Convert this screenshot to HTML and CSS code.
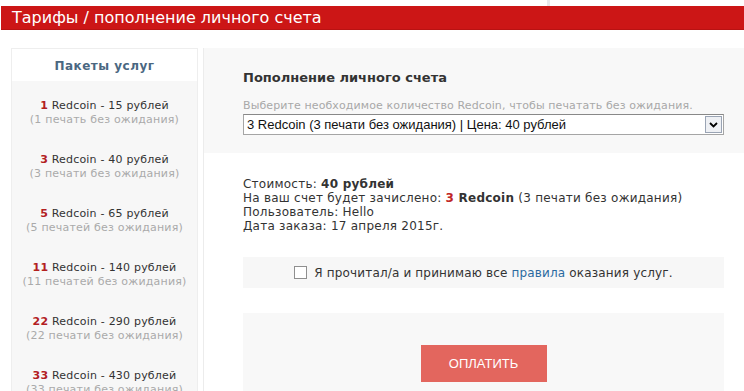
FILE: index.html
```html
<!DOCTYPE html>
<html lang="ru">

<head>
    <meta charset="UTF-8">
    <meta name="viewport" content="width=device-width, initial-scale=1.0">
    <title>Тарифы / пополнение личного счета</title>

    <link rel="stylesheet" href="styles.css">
</head>

<body>
    <div class="topStrip">
        <span class="topDivider"></span>
    </div>
    <div class="titleBar">
        <h1>Тарифы / пополнение личного счета</h1>
    </div>

    <div class="content">
        <div class="packs">
            <div class="packsHead">Пакеты услуг</div>
            <ul class="packsList">
                <li><b>1</b> Redcoin - 15 рублей<br><span>(1 печать без ожидания)</span></li>
                <li><b>3</b> Redcoin - 40 рублей<br><span>(3 печати без ожидания)</span></li>
                <li><b>5</b> Redcoin - 65 рублей<br><span>(5 печатей без ожидания)</span></li>
                <li><b>11</b> Redcoin - 140 рублей<br><span>(11 печатей без ожидания)</span></li>
                <li><b>22</b> Redcoin - 290 рублей<br><span>(22 печати без ожидания)</span></li>
                <li><b>33</b> Redcoin - 430 рублей<br><span>(33 печати без ожидания)</span></li>
            </ul>
        </div>

        <div class="order">
            <div class="orderTop">
                <h2>Пополнение личного счета</h2>
                <div class="hint">Выберите необходимое количество Redcoin, чтобы печатать без ожидания.</div>
                <div class="selectBox">
                    <span>3 Redcoin (3 печати без ожидания) | Цена: 40 рублей</span>
                    <span class="selectBtn">
                        <svg width="9" height="6" viewBox="0 0 9 6">
                            <path d="M1 1 L4.5 4.5 L8 1" fill="none" stroke="#000" stroke-width="1.8"/>
                        </svg>
                    </span>
                </div>
            </div>

            <div class="info">
                Стоимость: <b>40 рублей</b><br>
                На ваш счет будет зачислено: <b><em>3</em> Redcoin</b> (3 печати без ожидания)<br>
                Пользователь: Hello<br>
                Дата заказа: 17 апреля 2015г.
            </div>

            <div class="agree">
                <span class="checkBox"></span>
                <span>Я прочитал/а и принимаю все <a href="#">правила</a> оказания услуг.</span>
            </div>

            <div class="payBox">
                <div class="payBtn">ОПЛАТИТЬ</div>
            </div>
        </div>
    </div>
</body>

</html>
```

FILE: styles.css
```css
* {
    box-sizing: border-box;
}

body {
    margin: 0;
    font-family: "DejaVu Sans", Verdana, sans-serif;
    font-size: 11px;
    color: #333;
    overflow: hidden;
}

.topStrip {
    height: 6px;
    position: relative;
}

.topDivider {
    position: absolute;
    left: 547px;
    top: 0;
    width: 3px;
    height: 6px;
    background-color: #e8e8ec;
}

.titleBar {
    margin-left: 1px;
    height: 24px;
    background-color: #cc1616;
    border-bottom: 1px solid #b81212;
}

h1 {
    margin: 0;
    padding-left: 11px;
    font-size: 16px;
    font-weight: normal;
    line-height: 23px;
    color: #fff;
}

.content {
    display: flex;
    align-items: flex-start;
    padding: 18px 0 0 11px;
}

.packs {
    width: 187px;
    flex-shrink: 0;
    border: 1px solid #eeeeee;
    border-bottom: none;
    background-color: #f7f7f7;
}

.packsHead {
    height: 32px;
    line-height: 34px;
    background-color: #fff;
    text-align: center;
    font-size: 12px;
    letter-spacing: 0.5px;
    font-weight: bold;
    color: #4a6781;
}

.packsList {
    list-style: none;
    margin: 0;
    padding: 18px 0;
    text-align: center;
    letter-spacing: 0.2px;
}

.packsList li {
    line-height: 14px;
    margin-bottom: 26px;
}

.packsList b {
    color: #b3201f;
}

.packsList span {
    color: #aaa;
}

.order {
    flex: 1;
    margin-left: 5px;
    border-left: 1px solid #ececec;
    padding-bottom: 40px;
}

.orderTop {
    background-color: #f8f8f8;
    padding: 22px 20px 18px 39px;
}

h2 {
    margin: 0 0 13px;
    font-size: 13px;
    line-height: 16px;
    color: #333;
}

.hint {
    line-height: 14px;
    color: #a8a8a8;
    letter-spacing: 0.1px;
    margin-bottom: 1px;
}

.selectBox {
    display: flex;
    justify-content: space-between;
    align-items: center;
    height: 21px;
    border: 1px solid #a5a5a5;
    border-top-color: #888;
    background-color: #fff;
    font-family: "Liberation Sans", Arial, sans-serif;
    font-size: 13px;
    color: #111;
    padding-left: 3px;
}

.selectBtn {
    width: 17px;
    height: 17px;
    margin-right: 1px;
    border: 1px solid #9aa4b4;
    background-color: #eef0f4;
    display: flex;
    align-items: center;
    justify-content: center;
}

.info {
    margin: 24px 20px 0 39px;
    font-size: 12px;
    line-height: 14px;
    letter-spacing: 0.24px;
}

.info em {
    font-style: normal;
    color: #c02626;
}

.agree {
    margin: 24px 20px 0 39px;
    height: 31px;
    background-color: #f7f7f7;
    display: flex;
    align-items: center;
    justify-content: center;
    font-size: 12px;
    letter-spacing: 0.16px;
}

.checkBox {
    width: 13px;
    height: 13px;
    border: 1px solid #8f8f8f;
    background-color: #fff;
    margin-right: 7px;
}

.agree a {
    color: #2a6aa0;
    text-decoration: none;
}

.payBox {
    margin: 25px 20px 0 39px;
    padding: 32px 0 20px;
    background-color: #f8f8f8;
    display: flex;
    justify-content: center;
}

.payBtn {
    width: 126px;
    height: 37px;
    line-height: 37px;
    background-color: #e3665e;
    color: #fff;
    text-align: center;
    font-family: "Liberation Sans", Arial, sans-serif;
    font-size: 13px;
}
```
